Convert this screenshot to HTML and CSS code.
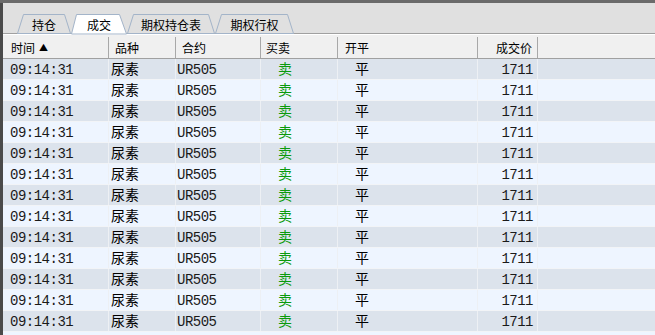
FILE: index.html
```html
<!DOCTYPE html>
<html>
<head>
    <title>成交</title>
    <link rel="stylesheet" href="styles.css">
</head>
<body>
    <div class="window">
        <div class="tabs">
            <div class="tab" style="width: 54px;">
                <svg class="tab-shape" width="54" height="20"><polygon points="0.5,19.5 6.5,0.5 47.5,0.5 53.5,19.5"/></svg>
                <span>持仓</span>
            </div>
            <div class="tab active" style="width: 56px;">
                <svg class="tab-shape" width="56" height="20"><polygon points="0.5,20 5.5,0.5 48.5,0.5 55.5,20"/></svg>
                <span>成交</span>
            </div>
            <div class="tab" style="width: 88px;">
                <svg class="tab-shape" width="88" height="20"><polygon points="0.5,19.5 6.5,0.5 81.5,0.5 87.5,19.5"/></svg>
                <span>期权持仓表</span>
            </div>
            <div class="tab" style="width: 79px;">
                <svg class="tab-shape" width="79" height="20"><polygon points="0.5,19.5 6.5,0.5 72.5,0.5 78.5,19.5"/></svg>
                <span>期权行权</span>
            </div>
        </div>
        <div class="grid">
            <div class="head">
                <div class="c-time">时间 <span class="sort">▲</span></div>
                <div class="c-name">品种</div>
                <div class="c-code">合约</div>
                <div class="c-side">买卖</div>
                <div class="c-open">开平</div>
                <div class="c-price">成交价</div>
                <div class="c-rest"></div>
            </div>
            <div id="rows"></div>
        </div>
    </div>
    <script>
        const rows = document.getElementById('rows');
        for (let i = 0; i < 13; i++) {
            const row = document.createElement('div');
            row.className = 'row ' + (i % 2 === 0 ? 'odd' : 'even');
            row.innerHTML =
                '<div class="c-time mono">09:14:31</div>' +
                '<div class="c-name">尿素</div>' +
                '<div class="c-code mono">UR505</div>' +
                '<div class="c-side sell">卖</div>' +
                '<div class="c-open">平</div>' +
                '<div class="c-price mono">1711</div>' +
                '<div class="c-rest"></div>';
            rows.appendChild(row);
        }
    </script>
</body>
</html>
```

FILE: styles.css
```css
body {
    margin: 0;
    height: 335px;
    overflow: hidden;
    background: #6b6b6b;
    font-family: "Noto Sans CJK SC", sans-serif;
    font-size: 12px;
    color: #000;
}
.window {
    margin-top: 3px;
    height: 332px;
    border-left: 3px solid #4a4a4a;
    background: #eef5ff;
}
.tabs {
    display: flex;
    padding: 11px 0 0 14px;
    height: 19px;
    background: #e0e0e0;
    border-bottom: 1px solid #a0a0a0;
}
.tab {
    position: relative;
    height: 19px;
    flex: none;
    display: flex;
    justify-content: center;
    align-items: center;
    line-height: 19px;
    font-size: 12px;
}
.tab span {
    position: relative;
    padding-top: 1px;
}
.tab-shape {
    position: absolute;
    left: 0;
    top: 0;
    overflow: visible;
}
.tab-shape polygon {
    fill: #e0e0e0;
    stroke: #a3b4c9;
    stroke-width: 1;
}
.tab.active {
    z-index: 2;
}
.tab.active .tab-shape polygon {
    fill: #ffffff;
}
.grid {
    border-top: 1px solid #ffffff;
}
.head {
    display: grid;
    grid-template-columns: 106px 67px 85px 77px 140px 60px 1fr;
    height: 23px;
    background: #f0f0f0;
    border-bottom: 1px solid #a0a0a0;
}
.head > div {
    display: flex;
    align-items: center;
    border-right: 1px solid #a8a8a8;
    margin-top: 2px;
    padding-left: 6px;
    overflow: hidden;
    white-space: nowrap;
}
.head .c-time {
    padding-left: 8px;
}
.head .c-side {
    padding-left: 5px;
}
.head .c-open {
    padding-left: 7px;
}
.head .c-price {
    justify-content: flex-end;
    padding-left: 0;
    padding-right: 5px;
}
.head .c-rest {
    border-right: none;
}
.sort {
    font-size: 9px;
    margin-left: 4px;
}
.row {
    display: grid;
    grid-template-columns: 106px 67px 85px 77px 140px 60px 1fr;
    height: 20px;
    border-bottom: 1px solid #f2f4f7;
    font-size: 14px;
}
.row.odd {
    background: #dce3ec;
}
.row.even {
    background: #eef5ff;
}
.row > div {
    display: flex;
    align-items: center;
    padding-bottom: 2px;
    border-right: 1px solid #edf0f4;
    white-space: nowrap;
    overflow: hidden;
}
.row .c-rest {
    border-right: none;
}
.row > .mono {
    font-family: "Liberation Mono", monospace;
    font-size: 14px;
    letter-spacing: -0.5px;
    color: #1a1a1a;
    padding-bottom: 0;
    padding-top: 2px;
}
.row .c-time {
    padding-left: 7px;
}
.row .c-name {
    padding-left: 2px;
}
.row .c-code {
    padding-left: 1px;
}
.row .c-side,
.row .c-open {
    padding-left: 17px;
}
.row .c-price {
    justify-content: flex-end;
    padding-right: 4px;
}
.sell {
    color: #0a9a0a;
}
```
